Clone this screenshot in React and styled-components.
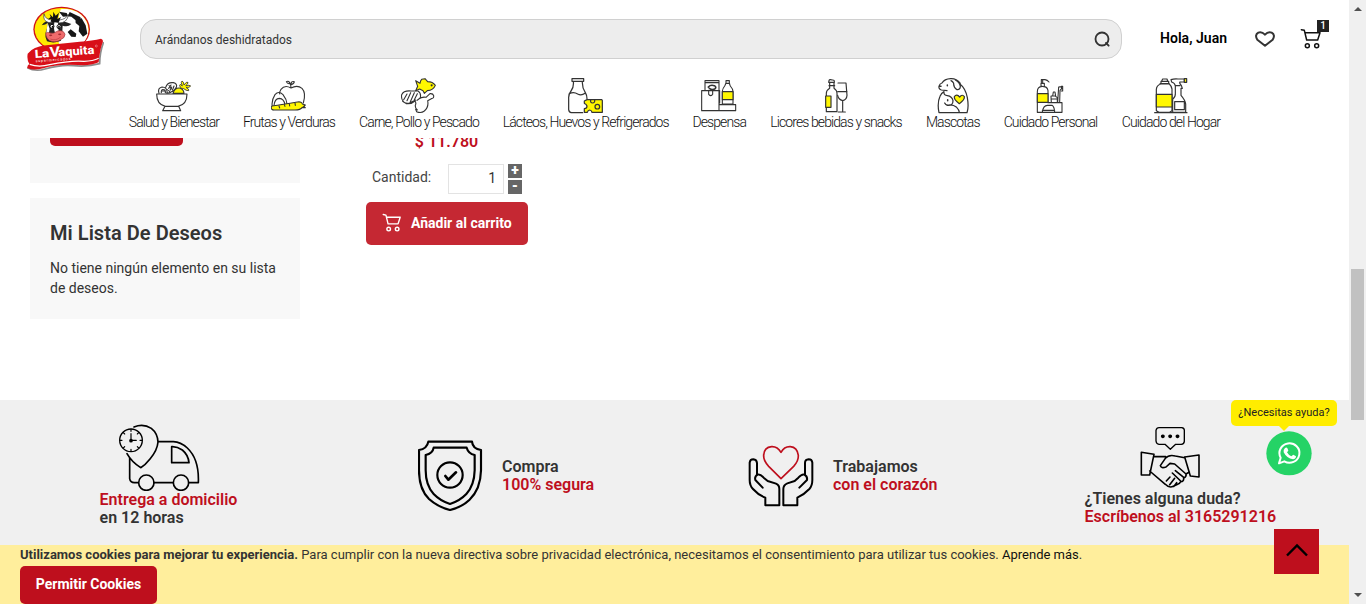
import React from "react";
import styled, { createGlobalStyle } from "styled-components";

const GlobalStyle = createGlobalStyle`
  * { box-sizing: border-box; }
  body { margin: 0; background: #fff; font-family: Roboto, "Liberation Sans", sans-serif; color: #333; overflow: hidden; }
  svg { display: block; flex: none; }
  p, h2 { margin: 0; }
`;

const Screen = styled.div`display: flex; width: 1366px; height: 604px; position: relative; overflow: hidden;`;
const Page = styled.div`display: flex; flex-direction: column; width: 1349px; height: 604px;`;

const Header = styled.header`height: 138px; flex: none; background: #fff; display: flex; flex-direction: column;`;
const TopBar = styled.div`display: flex; align-items: flex-start; height: 78px; padding: 0 0 0 26px;`;
const LogoLink = styled.div`padding-top: 6px; width: 114px;`;
const Search = styled.div`
  display: flex; align-items: center; justify-content: space-between;
  width: 982px; height: 40px; margin-top: 19px; padding: 1px 10px 0 14px;
  background: #ededed; border: 1px solid #d0d0d0; border-radius: 16px;
  font-size: 12px; color: #333;
`;
const Account = styled.div`display: flex; align-items: center; height: 78px; padding-left: 38px;`;
const Greeting = styled.span`width: 94.5px; padding-bottom: 2px; font-size: 14px; font-weight: 600; color: #000; letter-spacing: 0.04px; white-space: nowrap;`;
const CartLink = styled.div`position: relative; margin-left: 25px;`;
const Badge = styled.span`
  position: absolute; left: 17.5px; top: -8px; width: 12px; height: 12px;
  background: #222; color: #fff; font-size: 10px; line-height: 12px; text-align: center; font-weight: 500;
`;

const Nav = styled.nav`display: flex; padding-left: 129px;`;
const NavItem = styled.div`
  display: flex; flex-direction: column; align-items: center; margin-right: 24px;
  width: ${(p) => p.$width}px;
`;
const NavLabel = styled.span`
  font-size: 14px; font-weight: 300; line-height: 16px; letter-spacing: -0.9px; color: #111; white-space: nowrap;
`;

const Body = styled.main`display: flex; flex: none; height: 262px; padding-left: 30px; overflow: hidden;`;
const Sidebar = styled.aside`width: 270px;`;
const CompareBox = styled.section`height: 45px; background: #f8f8f8; padding-left: 20px; margin-bottom: 15px;`;
const CompareButton = styled.div`width: 133px; height: 8px; background: #be0f1d; border-radius: 0 0 5px 5px;`;
const WishBox = styled.section`height: 121px; background: #f8f8f8; padding: 22px 20px;`;
const WishTitle = styled.h2`font-size: 20px; line-height: 26px; font-weight: 600; letter-spacing: 0.04px; white-space: nowrap;`;
const WishText = styled.p`margin-top: 12px; font-size: 14px; line-height: 20px;`;

const Product = styled.div`margin-left: 66px; width: 162px;`;
const Price = styled.div`
  margin-top: -7px; height: 22px; padding-right: 1px; text-align: center; font-size: 16px; line-height: 22px; font-weight: 600;
  color: #be0f1d;
`;
const QtyRow = styled.div`display: flex; align-items: flex-start; height: 38px; margin: 10px 0 0 6px; padding-top: 1px;`;
const QtyLabel = styled.span`width: 76px; font-size: 14px; line-height: 26px; color: #444;`;
const QtyInput = styled.div`
  width: 56px; height: 30px; border: 1px solid #e3e3e3; padding-right: 7px; text-align: right;
  font-size: 14px; line-height: 27px; color: #333;
`;
const Steppers = styled.div`display: flex; flex-direction: column; gap: 2px; margin-left: 4px;`;
const Step = styled.span`
  width: 14px; height: 14px; background: #666; color: #fff; font-size: 14px; line-height: 13px; font-weight: 900; text-align: center;
`;
const AddButton = styled.div`
  display: flex; align-items: center; gap: 9px; width: 162px; height: 43px; margin-top: 1px; padding: 0 0 1px 16px;
  background: #c52833; border-radius: 5px; color: #fff; font-size: 14px; font-weight: 700; white-space: nowrap;
`;

const Services = styled.section`
  display: flex; align-items: flex-start; flex: none; height: 145px; padding-left: 99px; background: #f0f0f0;
`;
const Service = styled.div`
  display: flex; flex-direction: ${(p) => (p.$stacked ? "column" : "row")};
  width: ${(p) => p.$width}px; padding-top: ${(p) => p.$top}px;
`;
const ServiceIcon = styled.div`margin-left: ${(p) => p.$left || 0}px; width: ${(p) => p.$width}px;`;
const ServiceText = styled.div`
  padding: ${(p) => p.$top || 0}px 0 0 ${(p) => p.$left || 0}px;
  font-size: 16px; line-height: 18px; font-weight: 600; white-space: nowrap; color: #333;
`;
const Accent = styled.div`color: #be0f1d;`;

const Cookies = styled.footer`height: 59px; padding: 0 0 0 20px; background: #ffee9c;`;
const CookieText = styled.p`font-size: 13px; line-height: 19px; height: 21px; white-space: nowrap;`;
const CookieLink = styled.span`color: #111;`;
const AllowButton = styled.div`
  display: flex; align-items: center; justify-content: center; width: 137px; height: 38px; padding-bottom: 2px;
  background: #be0f1d; border-radius: 5px; color: #fff; font-size: 14px; font-weight: 700;
`;

const Scrollbar = styled.div`
  width: 17px; height: 604px; background: #f0f0f0; display: flex; flex-direction: column; align-items: center;
  justify-content: space-between; padding: 7px 0;
`;
const ScrollArrow = styled.span`
  width: 0; height: 0; border: 4px solid transparent;
  ${(p) => (p.$down ? "border-top-color: #505050; border-bottom: 0;" : "border-bottom-color: #505050; border-top: 0;")}
`;
const Thumb = styled.div`position: absolute; right: 2px; top: 269px; width: 13px; height: 151px; background: #c1c1c1;`;

const Help = styled.div`position: absolute; left: 1231px; top: 400px; width: 106px; display: flex; flex-direction: column; align-items: center;`;
const HelpBubble = styled.div`
  position: relative; width: 106px; height: 26px; border-radius: 5px; background: #ffed00; color: #222;
  font-size: 11px; line-height: 25px; text-align: center; white-space: nowrap;
  &::after { content: ""; position: absolute; left: 47px; top: 25px; border: 6px solid transparent; border-top-color: #ffed00; border-bottom: 0; }
`;
const WhatsApp = styled.div`margin: 5px 0 0 10px;`;
const ToTop = styled.div`
  position: absolute; left: 1274px; top: 529px; width: 45px; height: 45px; background: #be0f1d;
  display: flex; align-items: center; justify-content: center; padding-bottom: 3px;
`;

const Logo = () => (
  <svg width="78" height="66" viewBox="80 18 234 198">
    <ellipse cx="187" cy="88" rx="85" ry="68" fill="#d01118" />
    <ellipse cx="187" cy="88" rx="81" ry="64" fill="#ffea00" />
    <path d="M184 28C230 22 268 52 267 92Q266 112 252 128L180 132Q160 90 176 62Z" fill="#fff" />
    <path d="M211 36L244 52L238 67L227 59L216 50L205 49Z M228 57L247 55L259 76L264 101L251 110L238 94L240 78L229 69Z M205 96L214 88L231 101L229 111L216 110Z M179 35L202 39L207 49L191 50Z" fill="#171717" />
    <path d="M145 61Q134 67 127 76Q139 75 145 69Q144 87 139 97Q136 111 143 124Q164 132 190 121Q197 108 189 93L190 77Q206 83 216 72L199 66L181 65L163 60Z" fill="#222" />
    <path d="M166 64Q161 83 167 98L178 96L176 66Z M145 69L151 86L148 103L140 104Z M188 103L207 111L214 130L192 131L183 119Z" fill="#fff" />
    <path d="M134 41Q129 63 149 68L159 66L159 60Q137 59 134 41Z M180 60Q200 58 207 43Q205 70 176 69Z" fill="#fff" stroke="#333" strokeWidth="2" />
    <path d="M151 42L161 52L162 35L169 47L179 38L174 57L185 51L177 68L154 65L156 57L146 58L154 51Z" fill="#111" />
    <circle cx="158" cy="79" r="6" fill="#fff" stroke="#111" strokeWidth="3" /><circle cx="179" cy="80" r="6" fill="#fff" stroke="#111" strokeWidth="3" />
    <circle cx="160" cy="80" r="3" /><circle cx="179" cy="81" r="3" />
    <path d="M140 106Q137 95 149 98Q162 104 175 93Q193 89 197 103Q197 114 184 119Q169 130 151 122Q142 117 140 106Z" fill="#f06b6b" stroke="#9e3236" strokeWidth="2" />
    <ellipse cx="154" cy="106" rx="5" ry="2.5" fill="#a32b32" /><ellipse cx="181" cy="103" rx="5" ry="2.5" fill="#a32b32" />
    <path d="M153 117Q169 124 184 111" fill="none" stroke="#b8383d" strokeWidth="2" />
    <path d="M84 203Q108 216 137 207Q187 193 222 197Q265 201 301 191Q301 157 313 126" fill="none" stroke="#8d8d8d" strokeWidth="5" />
    <path d="M85 161Q101 140 141 136L241 125Q280 122 305 116Q315 119 308 133Q301 154 298 187Q272 198 237 195Q172 191 132 205Q101 213 84 204Q83 196 90 192Q82 180 85 161Z" fill="#d80f18" />
    <path d="M91 193Q118 203 151 194Q212 181 254 184Q281 184 298 175" fill="none" stroke="#fff" strokeWidth="3.5" />
    <g transform="rotate(-4 107 174)" fill="#fff" fontFamily="Roboto, sans-serif">
      <text x="107" y="174" fontSize="34" fontWeight="800" textLength="44" lengthAdjust="spacingAndGlyphs">La</text>
      <text x="152" y="174" fontSize="42" fontWeight="700" textLength="31" lengthAdjust="spacingAndGlyphs">V</text>
      <text x="178" y="174" fontSize="35" fontWeight="800" textLength="108" lengthAdjust="spacingAndGlyphs">aquita</text>
      <text x="108" y="187" fontSize="11" textLength="105">supermercados</text>
    </g>
    <circle cx="291" cy="138" r="3" fill="none" stroke="#fff" strokeWidth="1" />
  </svg>
);

const Line = ({ box, width, height, stroke = "#333", sw = 4, children }) => (
  <svg width={width} height={height} viewBox={box} fill="none" stroke={stroke} strokeWidth={sw} strokeLinecap="round" strokeLinejoin="round">
    {children}
  </svg>
);
const yellow = "#fff700";

const BowlIcon = () => (
  <Line box="108 23 108 108" width={36} height={36} sw={3.4}>
    <path d="M110 71H201Q201 103 174 108H136Q110 102 110 71Z M135 108L128 121H182L176 108" />
    <path d="M117 69Q112 53 126 50Q141 50 142 68M124 67Q123 57 130 58Q137 58 136 67M137 51Q142 35 160 37Q173 40 169 51Q165 61 153 65Q146 70 139 68M146 54L153 44M150 60L155 50M158 58L162 47" />
    <path d="M126 62H134M141 57L150 65M147 45L158 60" strokeWidth="3" />
    <path d="M159 69Q164 52 179 53Q191 56 192 69Z" fill={yellow} />
    <path d="M183 53Q175 45 181 42L187 47Q181 34 186 32Q191 33 192 44Q200 32 204 36Q204 42 197 46Q209 43 212 47Q208 53 198 51Q209 57 206 61Q199 62 191 55Z" fill={yellow} strokeWidth="2.5" />
  </Line>
);
const FruitIcon = () => (
  <Line box="453 23 108 108" width={36} height={36} sw={3.3}>
    <path d="M513 53Q494 42 483 57Q478 65 479 71M513 53Q532 43 546 54Q559 67 550 98M513 53Q513 42 507 35M510 40Q502 42 499 34Q507 30 511 41M513 43Q513 31 523 34Q522 41 513 43" />
    <path d="M459 119Q451 94 465 73Q476 60 489 73Q500 87 501 101M462 106Q464 84 478 84Q492 85 495 103" />
    <path d="M456 107Q487 103 532 95Q546 93 547 101L556 104L551 108L556 112L547 111Q541 119 525 119H461Q449 116 456 107Z" fill={yellow} />
    <path d="M477 107L479 113M493 103L495 108M508 101L509 107M525 98L526 105" />
  </Line>
);
const MeatIcon = () => (
  <Line box="843 23 108 108" width={36} height={36} sw={3.3}>
    <path d="M887 31L900 39Q901 31 905 27L915 25L923 34Q938 34 946 45Q940 60 922 61L913 69L909 61L899 56L887 61L893 48Z" fill={yellow} />
    <circle cx="935" cy="45" r="1.5" />
    <path d="M885 92Q874 102 859 100Q842 92 845 73Q851 60 873 62H894Q904 68 901 83M848 93Q856 101 868 98L887 89M861 71L851 88M872 67L861 91M883 67L871 94M892 70L883 88" />
    <path d="M891 90Q903 78 918 81L930 70Q939 69 941 76Q942 84 934 85L923 91Q927 110 913 122Q903 130 890 124L887 117M884 92Q890 96 886 105Q885 113 892 119" />
  </Line>
);
const DairyIcon = () => (
  <Line box="234 23 108 108" width={36} height={36} sw={3.7}>
    <path d="M246 25H281V33H246ZM250 33Q252 51 243 62Q235 72 236 84V118Q237 126 244 127H278M277 33Q276 52 286 67Q291 75 291 85M238 70Q251 63 263 71Q274 77 285 69" />
    <path d="M291 88H335Q338 89 337 94V126H306Q305 120 299 119Q294 119 292 126H283V115Q291 115 291 107Q289 101 283 99V92Z" fill={yellow} />
    <circle cx="322" cy="109" r="7" /><path d="M302 89Q300 97 308 98Q315 98 314 89" />
  </Line>
);
const PantryIcon = () => (
  <Line box="636 23 108 108" width={36} height={36} sw={3.3}>
    <path d="M648 58V31H690V121H638V61H692V98M648 37H690M659 60V72Q666 80 671 72V60M692 103H740V121H692" />
    <path d="M658 50Q665 42 676 46Q684 51 677 56Q668 60 661 54" strokeWidth="5" />
    <path d="M711 31H721V39L724 47Q731 55 732 63V101H700V63Q701 54 707 47L711 39ZM710 39H722" />
    <path d="M700 64H732V88H700Z" fill={yellow} />
  </Line>
);
const DrinksIcon = () => (
  <Line box="986 23 108 108" width={36} height={36} sw={3.5}>
    <path d="M1019 31Q1020 26 1029 29Q1036 28 1035 36H1018ZM1021 37V54Q1011 60 1011 69V124H1043V69Q1043 60 1034 54V37M1019 46H1036" />
    <path d="M1009 77H1025V111H1009Z" fill={yellow} />
    <path d="M1046 38H1070L1073 75Q1072 88 1060 91Q1047 87 1045 75M1045 64H1073M1060 92V125H1047M1060 125H1068" />
  </Line>
);
const PetIcon = () => (
  <Line box="106 23 108 108" width={36} height={36} sw={3.7}>
    <path d="M119 46Q120 40 127 38Q134 26 153 25Q170 24 182 39M119 46Q115 55 125 59L142 61M167 29Q181 37 182 49Q181 59 172 58Q161 51 162 39Q159 33 154 31M180 40Q198 54 203 82Q208 111 202 127H118Q112 98 121 78Q125 68 133 64M133 66Q132 75 143 76Q157 78 160 91Q160 106 145 105Q137 104 135 98M142 105Q159 101 171 111Q178 118 179 126" />
    <path d="M143 44V46M144 88V91M119 48H124" strokeWidth="4.5" />
    <path d="M180 80Q171 69 164 79Q162 88 179 100Q196 88 194 79Q188 70 180 80Z" fill={yellow} />
  </Line>
);
const CareIcon = () => (
  <Line box="400 23 108 108" width={36} height={36} sw={3.3}>
    <path d="M424 49V39H434V49M425 38V28H436Q443 29 448 35M429 28V37M427 48Q413 49 413 64V126H487V97H445V61Q443 49 432 49ZM428 125Q431 105 443 105H457Q464 109 465 125M428 120H465" />
    <path d="M413 70H445V96H413Z" fill={yellow} />
    <path d="M455 96L454 80Q453 76 459 77L461 65H466L468 78L473 82V96M454 86H472M459 77H468M474 95L477 50L485 49L486 55L481 60L480 95M485 48H489V62H485" />
  </Line>
);
const HomeCareIcon = () => (
  <Line box="760 23 108 108" width={36} height={36} sw={3.5}>
    <path d="M765 127H862M784 39V33H807V38M786 32L789 26H802L804 32M781 40H809M783 41Q771 45 770 57V121L778 126H810L817 121V56Q814 45 809 41Z" />
    <path d="M770 72H817V110H770Z" fill={yellow} />
    <path d="M814 28Q823 25 835 26H854V35H840Q839 40 845 45L848 54H844V75Q857 90 858 101V126H819V87Q828 79 827 70V47Q826 38 816 35ZM828 46H841M825 94H854V118H825Z" />
    <path d="M854 25H861V36H854Z" fill={yellow} />
  </Line>
);

const categories = [
  ["Salud y Bienestar", 90, BowlIcon],
  ["Frutas y Verduras", 92, FruitIcon],
  ["Carne, Pollo y Pescado", 120, MeatIcon],
  ["Lácteos, Huevos y Refrigerados", 165.5, DairyIcon],
  ["Despensa", 53.5, PantryIcon],
  ["Licores bebidas y snacks", 132, DrinksIcon],
  ["Mascotas", 53.5, PetIcon],
  ["Cuidado Personal", 94, CareIcon],
  ["Cuidado del Hogar", 99, HomeCareIcon],
];

const CartIcon = ({ color, width, height }) => (
  <Line box="718 85 66 66" width={width} height={height} stroke={color} sw={4.5}>
    <path d="M722 90L731 92L738 121H771L778 99H734" />
    <circle cx="740" cy="138" r="6" /><circle cx="768" cy="138" r="6" />
  </Line>
);

const TruckIcon = () => (
  <Line box="114 72 246 201" width={82} height={67} stroke="#000" sw={5}>
    <path d="M162 81Q190 70 214 85Q233 100 234 126Q232 151 210 177Q196 195 182 203Q155 186 141 161M149 174V236Q151 248 163 248H174M222 248H278M326 248H355Q358 178 322 144Q302 126 280 125H235M275 140V188H327Q325 165 307 150Q291 139 275 140Z" />
    <circle cx="199" cy="248" r="23" /><circle cx="303" cy="248" r="23" />
    <circle cx="153" cy="121" r="34" strokeWidth="4" />
    <path d="M153 101V121H169M153 88V94M153 148V154M120 121H126M180 121H186M130 98L134 102M176 98L172 102M130 144L134 140M176 144L172 140" strokeWidth="3.5" /><circle cx="153" cy="122" r="3" />
  </Line>
);
const ShieldIcon = () => (
  <Line box="54 60 198 213" width={66} height={71} stroke="#000" sw={6.5}>
    <path d="M85 65H216Q218 87 243 90V151Q242 208 208 240Q184 262 150 270Q114 261 87 237Q57 208 57 151V90Q81 87 85 65Z" />
    <path d="M101 83H200Q205 101 224 105V151Q223 196 199 222Q180 242 150 252Q120 242 101 222Q77 196 77 151V105Q98 101 101 83Z" />
    <circle cx="150" cy="165" r="38" /><path d="M136 168L145 179L168 157" strokeWidth="8" />
  </Line>
);
const HandsIcon = () => (
  <Line box="54 75 198 186" width={66} height={62} stroke="#000" sw={6}>
    <path d="M153 97Q142 79 125 80Q102 82 101 106Q100 122 116 139L153 176L191 139Q206 122 205 106Q202 82 181 80Q163 79 153 97Z" stroke="#be0f1d" strokeWidth="5" />
    <path d="M98 203L76 180Q73 169 83 164Q90 161 101 173L113 183L138 191Q148 195 148 207V256H106V233Q85 225 69 207Q59 197 59 180V128Q60 118 70 118Q80 119 81 129V164M208 203L231 180Q233 169 223 164Q216 161 205 173L194 183L172 190Q160 195 160 207V256H202V233Q222 224 238 207Q247 197 247 180V128Q246 118 236 118Q225 119 225 129V164" />
  </Line>
);
const HandshakeIcon = () => (
  <Line box="241 112 180 189" width={60} height={63} stroke="#000" sw={4.8}>
    <path d="M298 114H366Q374 115 374 122V155Q373 163 365 164H348L332 179L316 164H298Q290 163 289 154V122Q291 114 298 114Z" strokeWidth="4" />
    <path d="M309 140H310M331 140H332M353 140H354" strokeWidth="11" />
    <path d="M245 188L283 194L270 256H245ZM418 196L375 202L392 259L418 262ZM282 201H318M270 244L317 284Q328 296 341 290L354 284Q360 282 363 276Q373 276 372 265Q381 262 379 253L389 247M375 204L347 199Q328 194 317 206L302 228Q304 237 319 232L331 221L345 223L379 253M320 274L331 262M330 285L345 266M343 290L351 279M338 250L363 274M347 243L373 264" />
  </Line>
);

export default function App() {
  return (
    <Screen>
      <GlobalStyle />
      <Page>
        <Header>
          <TopBar>
            <LogoLink><Logo /></LogoLink>
            <Search>
              <span>Arándanos deshidratados</span>
              <Line box="103 93 50 50" width={16.67} height={16.67} sw={5.5}>
                <circle cx="127" cy="117" r="19.5" /><path d="M139 129L147 137" />
              </Line>
            </Search>
            <Account>
              <Greeting>Hola, Juan</Greeting>
              <Line box="583 92 60 48" width={20} height={16} sw={6}>
                <path d="M613 103Q603 93 593 97Q581 104 590 118L613 136L636 118Q645 104 633 97Q622 93 613 103Z" />
              </Line>
              <CartLink>
                <CartIcon color="#111" width={22} height={22} />
                <Badge>1</Badge>
              </CartLink>
            </Account>
          </TopBar>
          <Nav>
            {categories.map(([label, width, Icon]) => (
              <NavItem key={label} $width={width}>
                <Icon />
                <NavLabel>{label}</NavLabel>
              </NavItem>
            ))}
          </Nav>
        </Header>
        <Body>
          <Sidebar>
            <CompareBox><CompareButton /></CompareBox>
            <WishBox>
              <WishTitle>Mi Lista De Deseos</WishTitle>
              <WishText>No tiene ningún elemento en su lista de deseos.</WishText>
            </WishBox>
          </Sidebar>
          <Product>
            <Price>$ 11.780</Price>
            <QtyRow>
              <QtyLabel>Cantidad:</QtyLabel>
              <QtyInput>1</QtyInput>
              <Steppers><Step>+</Step><Step>-</Step></Steppers>
            </QtyRow>
            <AddButton>
              <CartIcon color="#fff" width={20} height={20} />
              Añadir al carrito
            </AddButton>
          </Product>
        </Body>
        <Services>
          <Service $stacked $width={319} $top={24}>
            <ServiceIcon $left={19} $width={82}><TruckIcon /></ServiceIcon>
            <ServiceText $left={0.6}><Accent>Entrega a domicilio</Accent>en 12 horas</ServiceText>
          </Service>
          <Service $width={330} $top={40}>
            <ServiceIcon $width={84}><ShieldIcon /></ServiceIcon>
            <ServiceText $top={18}>Compra<Accent>100% segura</Accent></ServiceText>
          </Service>
          <Service $width={336} $top={45}>
            <ServiceIcon $width={85}><HandsIcon /></ServiceIcon>
            <ServiceText $top={13}>Trabajamos<Accent>con el corazón</Accent></ServiceText>
          </Service>
          <Service $stacked $width={200} $top={27}>
            <ServiceIcon $left={56} $width={60}><HandshakeIcon /></ServiceIcon>
            <ServiceText $left={0.6}>¿Tienes alguna duda?<Accent>Escríbenos al 3165291216</Accent></ServiceText>
          </Service>
        </Services>
        <Cookies>
          <CookieText>
            <b>Utilizamos cookies para mejorar tu experiencia.</b> Para cumplir con la nueva directiva sobre privacidad electrónica, necesitamos el consentimiento para utilizar tus cookies. <CookieLink>Aprende más</CookieLink>.
          </CookieText>
          <AllowButton>Permitir Cookies</AllowButton>
        </Cookies>
      </Page>
      <Scrollbar><ScrollArrow /><ScrollArrow $down /></Scrollbar>
      <Thumb />
      <Help>
        <HelpBubble>¿Necesitas ayuda?</HelpBubble>
        <WhatsApp>
          <svg width="46" height="45" viewBox="618 122 138 135">
            <ellipse cx="687" cy="189" rx="68" ry="66" fill="#25d366" />
            <path d="M657 219L662 202A30 29 0 1 1 673 213Z" fill="none" stroke="#fff" strokeWidth="6" strokeLinejoin="round" />
            <path d="M675 173Q680 169 683 175L685 181L681 186Q686 195 694 198L700 193L708 198Q708 206 699 207Q680 204 671 186Q669 179 675 173Z" fill="#fff" />
          </svg>
        </WhatsApp>
      </Help>
      <ToTop>
        <svg width="22" height="14" viewBox="0 0 22 14" fill="none" stroke="#000" strokeWidth="2.4"><path d="M1 12.5L11 2.5L21 12.5" /></svg>
      </ToTop>
    </Screen>
  );
}
